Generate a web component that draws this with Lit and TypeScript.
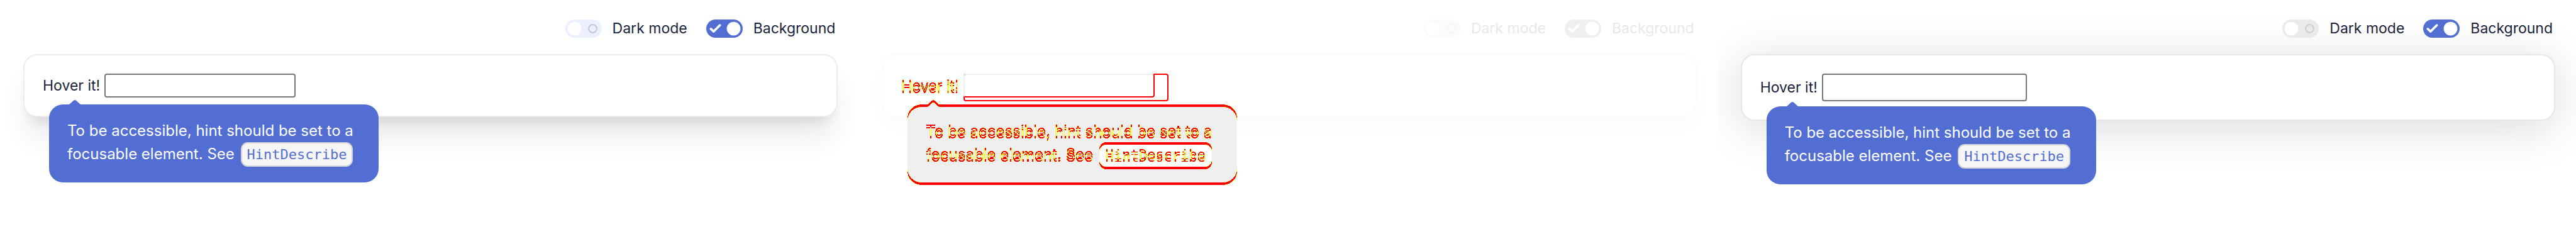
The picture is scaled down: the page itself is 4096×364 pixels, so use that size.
import { LitElement, html, css, svg } from "lit";
import { customElement, property } from "lit/decorators.js";

type Variant = "before" | "diff" | "after";

@customElement("mode-switch")
class ModeSwitch extends LitElement {
  @property() label = "";
  @property({ type: Boolean }) on = false;

  static styles = css`
    :host {
      display: block;
    }
    .item {
      display: flex;
      align-items: center;
      gap: 17px;
      white-space: nowrap;
    }
    .switch {
      position: relative;
      width: 58px;
      height: 29px;
    }
    .box {
      appearance: none;
      display: block;
      width: 100%;
      height: 100%;
      margin: 0;
      border-radius: 15px;
      background: var(--track-off);
    }
    .box:checked {
      background: var(--track-on);
    }
    .glyph {
      position: absolute;
      inset: 0;
      width: 100%;
      height: 100%;
      pointer-events: none;
    }
    .ring {
      fill: none;
      stroke: var(--ring);
      stroke-width: 2;
    }
    .thumb {
      fill: #fff;
    }
    .check {
      fill: none;
      stroke: #fff;
      stroke-width: 4;
      stroke-linecap: round;
      stroke-linejoin: round;
    }
  `;

  render() {
    return html`
      <label class="item">
        <span class="switch">
          <input class="box" type="checkbox" role="switch" .checked=${this.on} />
          <svg class="glyph" viewBox="0 0 64 32" aria-hidden="true">
            ${this.on
              ? svg`<path class="check" d="M8 16.5 L13 21 L24 10" /><circle class="thumb" cx="48" cy="16" r="12" />`
              : svg`<circle class="thumb" cx="16" cy="16" r="12" /><circle class="ring" cx="48" cy="16" r="7" />`}
          </svg>
        </span>
        <span>${this.label}</span>
      </label>
    `;
  }
}

@customElement("hint-panel")
class HintPanel extends LitElement {
  @property({ reflect: true }) variant: Variant = "before";

  static styles = css`
    :host {
      --track-off: #ebefff;
      --track-on: #526ed3;
      --ring: #c0c4d0;
      --card-border: #ededed;
      --card-shadow: 0 36px 46px -9px rgba(0, 0, 0, 0.1), 0 15px 18px -11px rgba(0, 0, 0, 0.1);
      --bubble: #526ed3;
      --chip: #f6f6f6;
      --chip-border: #d5d5d7;
      --chip-text: #526ed3;
      --bar-text: #1b1f3b;
      --label-text: #1b1f3b;
      display: block;
      box-sizing: border-box;
      overflow: hidden;
      padding: 31px 33px 0 37px;
      background: #fff;
      font: 23px/37px Inter, sans-serif;
      color: var(--bar-text);
    }
    :host([variant="after"]) {
      --track-off: #eaeaea;
      --ring: #cccccc;
      --card-border: #e6e6e6;
      --card-shadow: 0 11px 73px rgba(0, 0, 0, 0.15);
    }
    :host([variant="diff"]) {
      --track-off: #fbfbfb;
      --track-on: #efefef;
      --ring: #f5f5f5;
      --card-border: #fbfbfb;
      --card-shadow: 0 15px 40px rgba(0, 0, 0, 0.015);
      --bubble: #efefef;
      --chip: #fefefe;
      --chip-border: #fafafa;
      --chip-text: #efefef;
      --bar-text: #e8e8e8;
      --label-text: #e6e6e6;
    }
    .bar {
      display: flex;
      justify-content: flex-end;
      align-items: center;
      gap: 30px;
      height: 29px;
      padding-right: 4px;
      margin-bottom: 26px;
    }
    .card {
      display: flex;
      align-items: center;
      gap: 7px;
      padding: 29px;
      border: 2px solid var(--card-border);
      border-radius: 22px;
      background: #fff;
      box-shadow: var(--card-shadow);
    }
    .anchor {
      position: relative;
      color: var(--label-text);
    }
    .name {
      display: block;
      white-space: nowrap;
    }
    .field {
      position: relative;
      width: 304px;
      height: 38px;
    }
    :host([variant="after"]) .field {
      width: 326px;
      height: 44px;
    }
    .input {
      display: block;
      box-sizing: border-box;
      width: 100%;
      height: 100%;
      margin: 0;
      padding: 2px 4px;
      border: 2px solid #767676;
      border-radius: 4px;
      background: #fff;
      font: inherit;
    }
    :host([variant="diff"]) .input {
      width: 326px;
      height: 44px;
      border-color: #f00;
    }
    .ghost {
      position: absolute;
      inset: 0;
      border: 2px solid;
      border-color: #efefef #f00 #f00 #efefef;
      border-radius: 4px;
      pointer-events: none;
    }
    .tip {
      position: absolute;
      z-index: 1;
      top: calc(100% + 11px);
      left: 10px;
      box-sizing: border-box;
      width: 524px;
      padding: 23px 29px 27px;
      font-size: 24px;
      color: #fff;
    }
    .bubble {
      position: absolute;
      inset: 0;
      border-radius: 22px;
      background: var(--bubble);
    }
    .arrow {
      position: absolute;
      left: 32px;
      bottom: 100%;
      width: 18px;
      height: 7px;
      fill: var(--bubble);
    }
    .copy {
      position: relative;
      margin: 0;
      white-space: nowrap;
    }
    .code {
      position: relative;
      margin-left: 3px;
      padding: 7px 10px;
      font: 22px "DejaVu Sans Mono", monospace;
      color: var(--chip-text);
    }
    .plate {
      position: absolute;
      inset: 0;
      border: 2px solid var(--chip-border);
      border-radius: 11px;
      background: var(--chip);
    }
    .ink {
      position: relative;
    }
    .defs {
      position: absolute;
      width: 0;
      height: 0;
    }
    :host([variant="diff"]) :is(.name, .bubble, .plate, .ink) {
      filter: url(#shift-diff);
    }
  `;

  /* Marks what a 4px vertical shift changes: solid pixels red, antialiased ones yellow. */
  private filterDefs() {
    return html`
      <svg class="defs" aria-hidden="true">
        <filter id="shift-diff" x="-5%" y="-30%" width="110%" height="160%" color-interpolation-filters="sRGB">
          <feOffset in="SourceGraphic" dy="4" result="moved" />
          <feComposite in="SourceGraphic" in2="moved" operator="in" result="same" />
          <feComposite in="SourceGraphic" in2="moved" operator="xor" result="changed" />
          <feColorMatrix in="changed" type="matrix" values="0 0 0 0 1  0 0 0 1 0  0 0 0 0 0  0 0 0 1 0" />
          <feComponentTransfer result="marks">
            <feFuncG type="discrete" tableValues="1 1 1 0 0" />
            <feFuncA type="discrete" tableValues="0 1 1 1 1" />
          </feComponentTransfer>
          <feMerge>
            <feMergeNode in="same" />
            <feMergeNode in="marks" />
          </feMerge>
        </filter>
      </svg>
    `;
  }

  render() {
    const diff = this.variant === "diff";
    return html`
      ${diff ? this.filterDefs() : null}
      <div class="bar">
        <mode-switch label="Dark mode"></mode-switch>
        <mode-switch label="Background" on></mode-switch>
      </div>
      <div class="card">
        <div class="anchor">
          <label class="name" for="field">Hover it!</label>
          <div class="tip" role="tooltip" id="tip">
            <div class="bubble">
              <svg class="arrow" viewBox="0 0 18 7" aria-hidden="true">
                <path d="M0 7 L7 .8 Q9 -.8 11 .8 L18 7 Z" />
              </svg>
            </div>
            <p class="copy">
              <span class="ink">To be accessible, hint should be set to a</span><br />
              <span class="ink">focusable element. See</span>
              <code class="code"><span class="plate"></span><span class="ink">HintDescribe</span></code>
            </p>
          </div>
        </div>
        <div class="field">
          <input class="input" id="field" type="text" aria-describedby="tip" />
          ${diff ? html`<span class="ghost"></span>` : null}
        </div>
      </div>
    `;
  }
}

@customElement("app-root")
class AppRoot extends LitElement {
  static styles = css`
    :host {
      display: grid;
      grid-template-columns: repeat(3, 1fr);
      min-height: 100vh;
    }
  `;

  render() {
    return html`
      <hint-panel variant="before"></hint-panel>
      <hint-panel variant="diff"></hint-panel>
      <hint-panel variant="after"></hint-panel>
    `;
  }
}
